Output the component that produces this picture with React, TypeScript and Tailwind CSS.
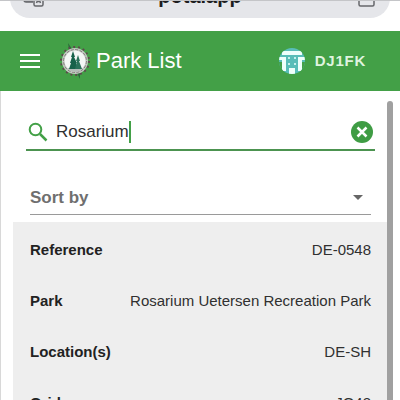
import React, { useState } from "react";

const rows = [
  { label: "Reference", value: "DE-0548" },
  { label: "Park", value: "Rosarium Uetersen Recreation Park" },
  { label: "Location(s)", value: "DE-SH" },
  { label: "Grid", value: "JO43" },
];

function AddressBar() {
  return (
    <div className="flex h-[31px] shrink-0 items-end overflow-hidden border-t border-[#c4c5c8] px-[10px] pb-[13px]">
      <div className="flex h-12 flex-1 shrink-0 items-center justify-between rounded-[20px] bg-[#e5e6ea] px-3 text-[#1c1c1e]">
        <button aria-label="Translate" className="pt-2">
          <svg width="22" height="22" viewBox="0 0 22 22" fill="none" stroke="#66676b" strokeWidth="1.5">
            <path d="M11 15H4a2 2 0 0 1-2-2V2h10v4" fill="#8a8b90" />
            <rect x="12" y="6" width="9" height="13" rx="1.5" fill="#e5e6ea" />
            <path d="M14.500 16l2-5 2 5M15 14.500h3" />
          </svg>
        </button>
        <span className="pt-1 text-xl font-bold">pota.app</span>
        <button aria-label="Share" className="pt-[6px]">
          <svg width="22" height="26" viewBox="0 0 22 26" fill="none" stroke="#66676b" strokeWidth="1.500">
            <path d="M7 8H3v12.500a1.500 1.500 0 0 0 1.500 1.500h12a1.500 1.500 0 0 0 1.500-1.500V8h-4M10.500 13V2M7 5l3.500-3.500L14 5" />
          </svg>
        </button>
      </div>
    </div>
  );
}

function ParkLogo() {
  return (
    <svg width="34" height="38" viewBox="0 0 34 38" aria-hidden="true">
      <path d="M10 1l4 6-3 1zM22 37l-3-6 3-1z" fill="#2c6a3c" />
      <circle cx="17" cy="19" r="14" fill="none" stroke="#5d4a4c" strokeWidth="2" strokeDasharray="2 2.900" />
      <circle cx="17" cy="19" r="13" fill="#c3c8c3" />
      <circle cx="17" cy="19" r="11.500" fill="none" stroke="#847f7b" strokeWidth="1" strokeDasharray="3 1.500" />
      <circle cx="17" cy="19" r="10.500" fill="#f4f7f5" />
      <path d="M9 26h16a10 10 0 0 1-16 0z" fill="#b4bdb8" />
      <path d="M15 9l2 6-1 0 3 6-1 0 2 6h-9l2-6h-1l2-6h-1z" fill="#17624a" />
      <path d="M20 13l2 6h-1l3 8h-7l2-8h-1z" fill="#2a7259" />
    </svg>
  );
}

function Avatar() {
  return (
    <svg width="26" height="26" viewBox="0 0 26 26" aria-hidden="true">
      <clipPath id="avatar">
        <circle cx="13" cy="13" r="13" />
      </clipPath>
      <g clipPath="url(#avatar)">
        <path d="M0 0h26v26H0z" fill="#59bdb8" />
        <path d="M3 3h20v4H3zM0 9h7v3H0zM19 9h7v3h-7zM3 9h4v14H3zM19 9h4v14h-4zM10 20h6v6h-6z" fill="#effffb" />
        <path d="M9 9h2v2H9zM15 9h2v2h-2zM9 15h2v2H9zM15 15h2v2h-2z" fill="#c4f0ec" />
        <path d="M0 14h3v12H0zM23 14h3v12h-3z" fill="#43a047" />
      </g>
    </svg>
  );
}

function Header() {
  return (
    <header className="flex h-[60px] shrink-0 items-center bg-[#43a047] pr-[34px] pl-5 text-white">
      <button aria-label="Menu">
        <svg width="20" height="14" viewBox="0 0 20 14" fill="#ffffff" aria-hidden="true">
          <path d="M0 0h20v2H0zM0 6h20v2H0zM0 12h20v2H0z" />
        </svg>
      </button>
      <div className="ml-[18px] flex flex-1 items-center gap-1">
        <ParkLogo />
        <h1 className="text-[22px] leading-7">Park List</h1>
      </div>
      <button className="flex items-center gap-[10px] text-[15px] font-bold tracking-wider text-[#dff3df]">
        <Avatar />
        DJ1FK
      </button>
    </header>
  );
}

export default function App() {
  const [query, setQuery] = useState("Rosarium");
  return (
    <div className="flex h-screen flex-col overflow-hidden bg-white font-['Liberation_Sans',Arial,sans-serif] text-[#303030]">
      <AddressBar />
      <Header />
      <div className="flex min-h-0 flex-1 border-l border-[#d8d8d8] pr-[7px]">
        <main className="min-w-0 flex-1 overflow-hidden pt-6 pl-3">
          <div className="mr-3 ml-[13px] flex h-9 items-center border-b-2 border-[#4c9350] px-[2px]">
            <label htmlFor="search" className="flex flex-1 items-center gap-2">
              <svg width="20" height="20" viewBox="0 0 20 20" fill="none" stroke="#43a047" strokeWidth="2" aria-hidden="true">
                <circle cx="7.500" cy="7.500" r="5.800" />
                <path d="M12 12l6.500 6.500" strokeWidth="2.500" />
              </svg>
              <input
                id="search"
                aria-label="Search parks"
                value={query}
                onChange={(e) => setQuery(e.target.value)}
                className="field-sizing-content h-[22px] border-r-2 border-[#43a047] text-[17px] outline-none"
              />
            </label>
            <button aria-label="Clear search" onClick={() => setQuery("")}>
              <svg width="22" height="22" viewBox="0 0 22 22" aria-hidden="true">
                <circle cx="11" cy="11" r="11" fill="#3f9c44" />
                <path d="M6.500 6.500l9 9M15.500 6.500l-9 9" stroke="#ffffff" strokeWidth="2.500" />
              </svg>
            </button>
          </div>
          <div className="relative mt-[30px] mr-4 ml-[17px]">
            <select
              aria-label="Sort by"
              className="h-[34px] w-full appearance-none border-b border-[#9a9a9a] text-[17px] font-bold text-[#6f6f6f] outline-none"
            >
              <option>Sort by</option>
              {rows.map((row) => (
                <option key={row.label}>{row.label}</option>
              ))}
            </select>
            <svg className="pointer-events-none absolute top-[14px] right-2" width="10" height="5" viewBox="0 0 10 5" aria-hidden="true">
              <path d="M0 0h10L5 5z" fill="#666666" />
            </svg>
          </div>
          <div className="mt-[7px] bg-[#eeeeee] px-4 pt-[2px] pl-[17px]">
            <table className="w-full text-[15px] leading-5">
              <tbody>
                {rows.map((row) => (
                  <tr key={row.label} className="h-[51px]">
                    <th scope="row" className="text-left font-bold text-[#222222]">
                      {row.label}
                    </th>
                    <td className="text-right">{row.value}</td>
                  </tr>
                ))}
              </tbody>
            </table>
          </div>
        </main>
        <div className="mt-[10px] w-[6px] rounded-t-full bg-[#a0a0a0]" />
      </div>
    </div>
  );
}
